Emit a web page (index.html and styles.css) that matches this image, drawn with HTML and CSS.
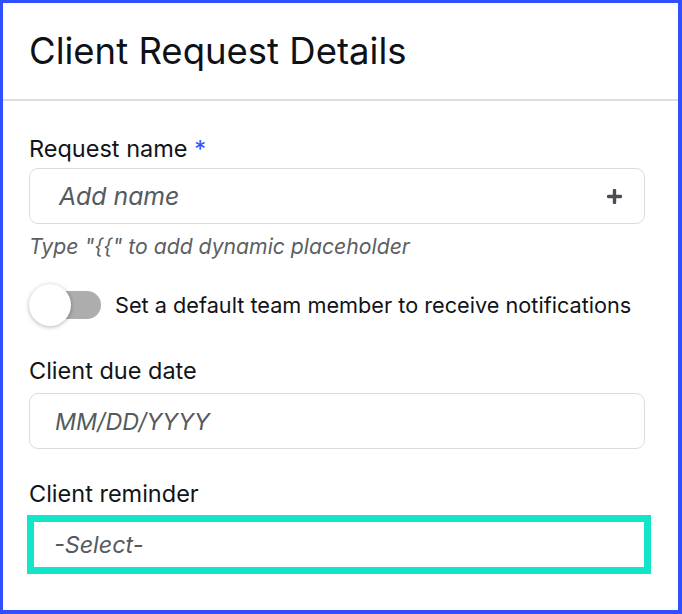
FILE: index.html
```html
<!DOCTYPE html>
<html lang="en">
<head>
    <meta charset="UTF-8">
    <meta name="viewport" content="width=device-width, initial-scale=1.0">
    <title>Client Request Details</title>
    <link rel="stylesheet" href="styles.css">
</head>
<body>

    <div class="panel">
        <header class="panel-header">
            <h1>Client Request Details</h1>
        </header>

        <div class="panel-body">
            <div class="field">
                <label class="field-label">Request name <span class="required">*</span></label>
                <div class="input-box">
                    <span class="placeholder">Add name</span>
                    <svg class="plus" width="15" height="15" viewBox="0 0 15 15">
                        <path d="M7.5 1.5v12M1.5 7.5h12" stroke="#4a4d52" stroke-width="3.4" stroke-linecap="round"/>
                    </svg>
                </div>
                <div class="hint">Type "{{" to add dynamic placeholder</div>
            </div>

            <div class="toggle-row">
                <div class="toggle">
                    <div class="toggle-track"></div>
                    <div class="toggle-knob"></div>
                </div>
                <span class="toggle-label">Set a default team member to receive notifications</span>
            </div>

            <div class="field field-date">
                <label class="field-label">Client due date</label>
                <div class="input-box">
                    <span class="placeholder small">MM/DD/YYYY</span>
                </div>
            </div>

            <div class="field field-reminder">
                <label class="field-label">Client reminder</label>
                <div class="select-box">
                    <span class="placeholder small">-Select-</span>
                </div>
            </div>
        </div>
    </div>

</body>
</html>
```

FILE: styles.css
```css
html, body {
    margin: 0;
    padding: 0;
    background-color: #fff;
}
body {
    font-family: 'Inter', 'Liberation Sans', sans-serif;
    color: #111418;
}
.panel {
    box-sizing: border-box;
    width: 682px;
    height: 614px;
    border-style: solid;
    border-color: #3050ff;
    border-width: 3px 4px 4px 3px;
    overflow: hidden;
}
.panel-header {
    height: 96px;
    border-bottom: 2px solid #dedede;
    display: flex;
    align-items: center;
    padding-left: 26px;
}
h1 {
    margin: 0;
    font-size: 36.5px;
    font-weight: 400;
    color: #0e1116;
}
.panel-body {
    padding: 34px 33px 0 26px;
}
.field-label {
    display: block;
    font-size: 23.5px;
    line-height: 28px;
    font-weight: 400;
    margin-bottom: 5px;
}
.required {
    color: #3050ff;
}
.input-box {
    box-sizing: border-box;
    height: 56px;
    border: 1px solid #dcdcdc;
    border-radius: 9px;
    display: flex;
    align-items: center;
    justify-content: space-between;
    padding: 0 22px 0 29px;
}
.placeholder {
    font-style: italic;
    font-size: 24.8px;
    color: #555a60;
}
.placeholder.small {
    font-size: 23.3px;
}
.field-date .input-box {
    padding-left: 25px;
}
.hint {
    margin-top: 9px;
    font-size: 21.2px;
    line-height: 26px;
    font-style: italic;
    color: #5b5f64;
}
.toggle-row {
    display: flex;
    align-items: center;
    gap: 14px;
    margin-top: 25px;
}
.toggle {
    position: relative;
    width: 72px;
    height: 42px;
}
.toggle-track {
    position: absolute;
    left: 11px;
    top: 7px;
    width: 61px;
    height: 28px;
    border-radius: 14px;
    background-color: #adadad;
}
.toggle-knob {
    position: absolute;
    left: 0;
    top: 0;
    width: 42px;
    height: 42px;
    border-radius: 50%;
    background-color: #fff;
    box-shadow: 0 1px 4px rgba(0, 0, 0, 0.3);
}
.toggle-label {
    font-size: 21.7px;
}
.field-date {
    margin-top: 31px;
}
.field-date .field-label {
    margin-bottom: 8px;
}
.field-reminder {
    margin-top: 31px;
}
.field-reminder .field-label {
    margin-bottom: 7px;
}
.select-box {
    box-sizing: border-box;
    height: 59px;
    margin: 0 -6px 0 -2px;
    border: 7px solid #12e5c8;
    display: flex;
    align-items: center;
    padding-left: 20px;
}
```
